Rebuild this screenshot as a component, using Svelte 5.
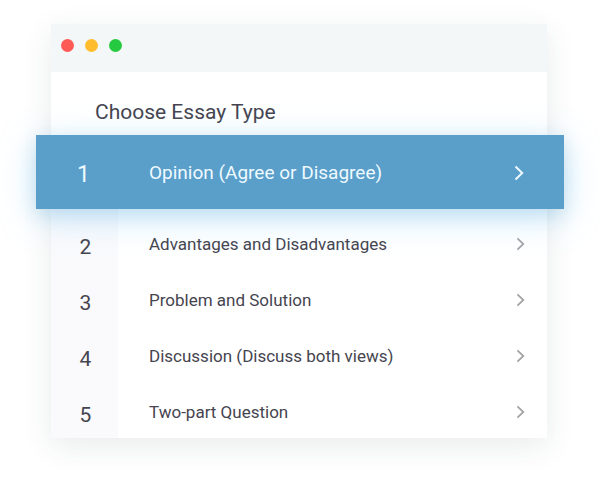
<script>
  const types = [
    'Opinion (Agree or Disagree)',
    'Advantages and Disadvantages',
    'Problem and Solution',
    'Discussion (Discuss both views)',
    'Two-part Question'
  ];
  let selected = $state(0);
</script>

<main>
  <section class="window" aria-labelledby="title">
    <header class="bar">
      <span class="dot close"></span>
      <span class="dot minimize"></span>
      <span class="dot expand"></span>
    </header>
    <h1 id="title">Choose Essay Type</h1>
    <div class="list">
      {#each types as type, i}
        <button
          type="button"
          class="row"
          class:active={selected === i}
          aria-pressed={selected === i}
          onclick={() => (selected = i)}
        >
          <span class="number">{i + 1}</span>
          <span class="label">{type}</span>
          <svg class="chevron" viewBox="0 0 10 16" aria-hidden="true">
            <path d="M1.5 1.5 8.2 8 1.5 14.5" />
          </svg>
        </button>
      {/each}
    </div>
  </section>
</main>

<style>
  :global(body) {
    margin: 0;
    background: #fff;
    font-family: Roboto, 'Liberation Sans', sans-serif;
    color: #45444f;
  }
  main {
    padding: 24px 53px 48px 51px;
  }
  .window {
    background: #fff;
    box-shadow: 0 8px 28px rgba(40, 60, 60, 0.1);
  }
  .bar {
    display: flex;
    align-items: center;
    gap: 11px;
    height: 48px;
    padding: 0 10px 5px;
    box-sizing: border-box;
    background: #f4f7f7;
  }
  .dot {
    width: 13px;
    height: 13px;
    border-radius: 50%;
  }
  .close { background: #ff5b56; }
  .minimize { background: #ffbd2e; }
  .expand { background: #25ca40; }
  h1 {
    margin: 0;
    padding: 28px 44px 11px;
    font-size: 21px;
    line-height: 24px;
    font-weight: 400;
  }
  .list {
    display: flex;
    flex-direction: column;
    gap: 4px;
    background: linear-gradient(to right, #fafafc 67px, #fff 67px);
  }
  .row {
    display: flex;
    align-items: center;
    height: 52px;
    padding: 0 22px 0 0;
    border: 0;
    background: transparent;
    color: inherit;
    font-family: inherit;
    font-size: 17px;
    line-height: 20px;
    text-align: left;
    cursor: pointer;
  }
  .number {
    width: 69px;
    padding-top: 6px;
    box-sizing: border-box;
    font-size: 21px;
    line-height: 24px;
    text-align: center;
  }
  .label {
    flex: 1;
    padding-left: 29px;
  }
  .chevron {
    width: 9px;
    height: 14px;
    fill: none;
    stroke: #a3a3a6;
    stroke-width: 2;
  }
  .row.active {
    position: relative;
    z-index: 1;
    height: 74px;
    margin: 0 -17px 5px -15px;
    padding: 2px 40px 0 15px;
    background: #5a9eca;
    color: #eefaff;
    font-size: 19px;
    box-shadow:
      0 8px 36px rgba(110, 200, 255, 0.38),
      0 6px 16px rgba(60, 110, 140, 0.16);
  }
  .active .number {
    width: 65px;
    padding-top: 4px;
    font-size: 23px;
  }
  .active .label {
    padding-left: 33px;
  }
  .active .chevron {
    width: 10px;
    height: 16px;
    stroke: #eefaff;
  }
</style>
